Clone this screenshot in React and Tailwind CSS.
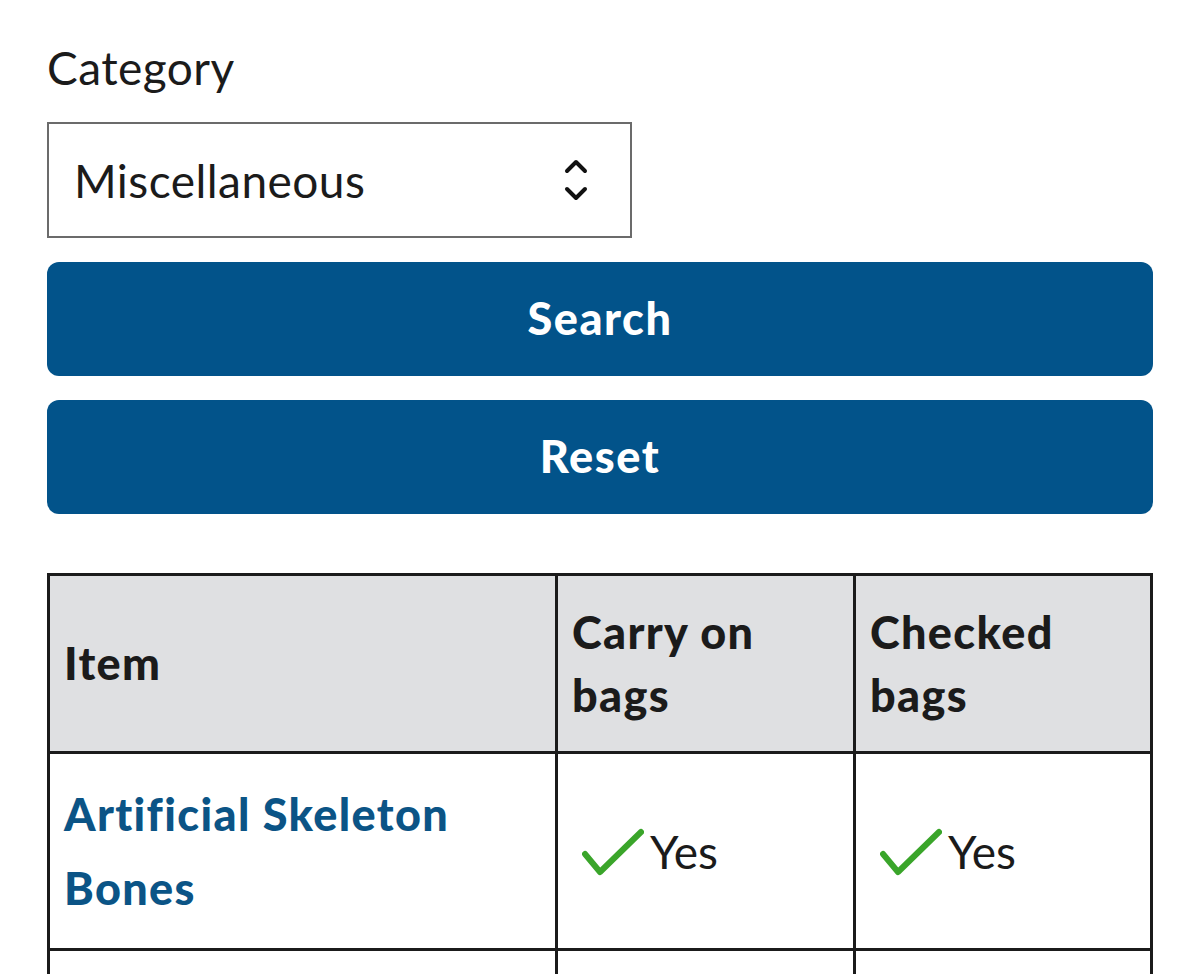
import { useState } from "react";

function Check() {
  return (
    <svg width="62" height="50" viewBox="0 0 62 50" className="shrink-0 mt-[4px]">
      <path d="M3 26 L18 44 L59 4" fill="none" stroke="#3aa52a" strokeWidth="6" strokeLinecap="round" strokeLinejoin="round" />
    </svg>
  );
}

function UpDown() {
  return (
    <svg width="26" height="46" viewBox="0 0 26 46">
      <path d="M4 14 L13 5 L22 14" fill="none" stroke="#111" strokeWidth="4" strokeLinecap="round" strokeLinejoin="round" />
      <path d="M4 32 L13 41 L22 32" fill="none" stroke="#111" strokeWidth="4" strokeLinecap="round" strokeLinejoin="round" />
    </svg>
  );
}

const ROWS = [
  { item: "Artificial Skeleton Bones", carry: "Yes", checked: "Yes" },
  { item: "", carry: "", checked: "" },
];

export default function App() {
  const [category, setCategory] = useState("Miscellaneous");

  return (
    <div className="min-h-screen bg-white px-[47px] pt-[40px] text-[#1b1b1b] font-['Lato','Liberation_Sans',sans-serif] overflow-hidden h-[974px]">
      {/* Category */}
      <label className="block text-[46px] leading-[56px] mb-[26px] tracking-[0.01em]">Category</label>
      <div className="relative w-[585px] h-[116px] border-2 border-[#6b6b6b] flex items-center px-[25px]">
        <span className="text-[46px] flex-1 tracking-[0.01em]">{category}</span>
        <span className="mr-[16px]"><UpDown /></span>
      </div>

      {/* Buttons */}
      <button
        onClick={() => setCategory("Miscellaneous")}
        className="mt-[24px] w-full h-[114px] rounded-[12px] bg-[#02538a] text-white text-[45px] font-black tracking-[0.035em]"
      >
        Search
      </button>
      <button className="mt-[24px] w-full h-[114px] rounded-[12px] bg-[#02538a] text-white text-[45px] font-black tracking-[0.035em]">
        Reset
      </button>

      {/* Results */}
      <table className="mt-[59px] w-full border-collapse border-[3px] border-[#1b1b1b] text-[45px] tracking-[0.03em]">
        <thead>
          <tr className="bg-[#dfe0e2] h-[178px]">
            <th className="border-[3px] border-[#1b1b1b] w-[508px] text-left font-black px-[14px] leading-[63px]">Item</th>
            <th className="border-[3px] border-[#1b1b1b] w-[298px] text-left font-black px-[14px] leading-[63px]">Carry on<br />bags</th>
            <th className="border-[3px] border-[#1b1b1b] text-left font-black px-[14px] leading-[63px]">Checked<br />bags</th>
          </tr>
        </thead>
        <tbody>
          {ROWS.map((r, i) => (
            <tr key={i} className="h-[197px]">
              <td className="border-[3px] border-[#1b1b1b] px-[14px] align-middle">
                <a href="#" className="text-[#0b5486] font-black leading-[74px] block">
                  {r.item === "Artificial Skeleton Bones" ? (<>Artificial Skeleton<br />Bones</>) : r.item}
                </a>
              </td>
              <td className="border-[3px] border-[#1b1b1b] px-[24px] align-middle">
                {r.carry && (
                  <div className="flex items-center gap-[6px] text-[46px] tracking-normal">
                    <Check />
                    <span>{r.carry}</span>
                  </div>
                )}
              </td>
              <td className="border-[3px] border-[#1b1b1b] px-[24px] align-middle">
                {r.checked && (
                  <div className="flex items-center gap-[6px] text-[46px] tracking-normal">
                    <Check />
                    <span>{r.checked}</span>
                  </div>
                )}
              </td>
            </tr>
          ))}
        </tbody>
      </table>
    </div>
  );
}
